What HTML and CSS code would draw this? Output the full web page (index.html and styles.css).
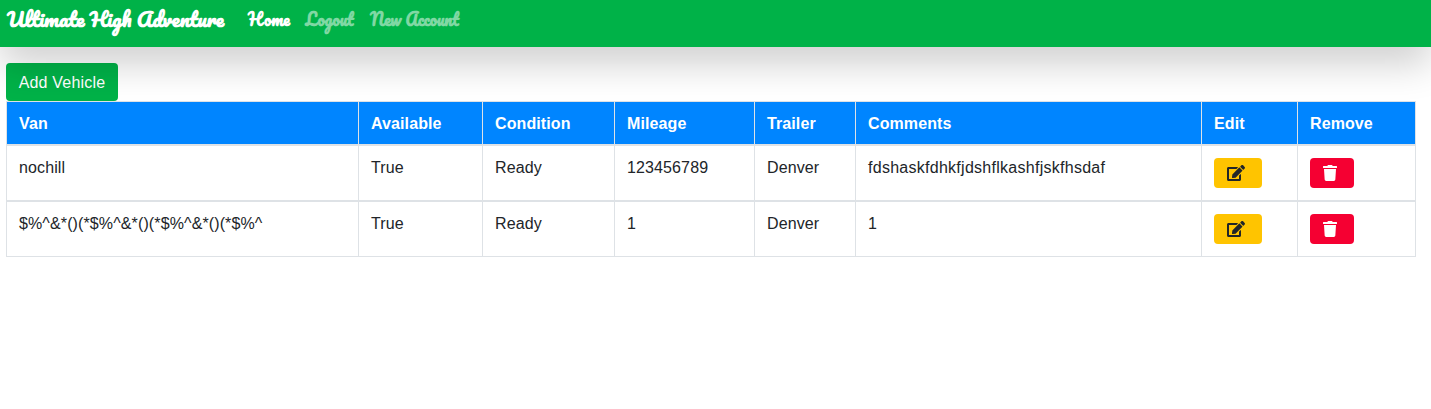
FILE: index.html
```html
<!DOCTYPE html>
<html lang="en">
<head>
<meta charset="utf-8">
<title>Ultimate High Adventure</title>
<link rel="stylesheet" href="styles.css">
</head>
<body>
<svg width="0" height="0" class="sprite" aria-hidden="true">
  <symbol id="edit" viewBox="0 0 576 512"><path d="M402.6 83.2l90.2 90.2c3.8 3.8 3.8 10 0 13.8L274.4 405.600l-92.800 10.300c-12.400 1.400-22.900-9.100-21.500-21.500l10.300-92.800L388.800 83.200c3.800-3.800 10-3.800 13.800 0zm162-22.900l-48.800-48.800c-15.200-15.200-39.900-15.200-55.200 0l-35.400 35.400c-3.800 3.800-3.800 10 0 13.800l90.200 90.200c3.800 3.800 10 3.800 13.800 0l35.400-35.400c15.200-15.300 15.200-40 0-55.200zM384 346.200V448H64V128h229.800c3.200 0 6.200-1.300 8.500-3.500l40-40c7.600-7.600 2.200-20.500-8.500-20.500H48C21.500 64 0 85.500 0 112v352c0 26.500 21.500 48 48 48h352c26.500 0 48-21.500 48-48V306.200c0-10.700-12.900-16-20.500-8.500l-40 40c-2.200 2.300-3.500 5.300-3.500 8.500z"/></symbol>
  <symbol id="trash" viewBox="0 0 448 512"><path d="M432 32H312l-9.400-18.700A24 24 0 0 0 281.100 0H166.800a23.720 23.720 0 0 0-21.400 13.300L136 32H16A16 16 0 0 0 0 48v32a16 16 0 0 0 16 16h416a16 16 0 0 0 16-16V48a16 16 0 0 0-16-16zM53.200 467a48 48 0 0 0 47.900 45h245.800a48 48 0 0 0 47.900-45L416 128H32z"/></symbol>
</svg>
<nav class="navbar">
  <a class="brand">Ultimate High Adventure</a>
  <a class="link home">Home</a>
  <a class="link logout">Logout</a>
  <a class="link account">New Account</a>
</nav>
<main class="content">
  <button class="btn add">Add Vehicle</button>
  <table class="vehicles">
    <colgroup><col class="c-van"><col class="c-available"><col class="c-condition"><col class="c-mileage"><col class="c-trailer"><col class="c-comments"><col class="c-edit"><col class="c-remove"></colgroup>
    <thead>
      <tr><th>Van</th><th>Available</th><th>Condition</th><th>Mileage</th><th>Trailer</th><th>Comments</th><th>Edit</th><th>Remove</th></tr>
    </thead>
    <tbody>
      <tr><td>nochill</td><td>True</td><td>Ready</td><td>123456789</td><td>Denver</td><td><span class="long">fdshaskfdhkfjdshflkashfjskfhsdaf</span></td>
        <td><button class="btn edit" aria-label="Edit"><svg class="i-edit"><use href="#edit"/></svg></button></td>
        <td><button class="btn remove" aria-label="Remove"><svg class="i-trash"><use href="#trash"/></svg></button></td></tr>
      <tr><td>$%^&amp;*()(*$%^&amp;*()(*$%^&amp;*()(*$%^</td><td>True</td><td>Ready</td><td>1</td><td>Denver</td><td>1</td>
        <td><button class="btn edit" aria-label="Edit"><svg class="i-edit"><use href="#edit"/></svg></button></td>
        <td><button class="btn remove" aria-label="Remove"><svg class="i-trash"><use href="#trash"/></svg></button></td></tr>
    </tbody>
  </table>
</main>
</body>
</html>
```
FILE: styles.css
```css
* { box-sizing: border-box; }
body {
  margin: 0;
  background: #fff;
  color: #212529;
  font: 16px/24px "Helvetica Neue", "Liberation Sans", Arial, sans-serif;
}
.sprite { position: absolute; }
.navbar {
  position: relative;
  display: flex;
  height: 47px;
  padding-left: 7px;
  background: #00b248;
  box-shadow: 0 16px 38px rgba(0, 0, 0, .2);
  color: #fff;
  font-family: Pacifico, cursive;
  font-weight: bold;
  white-space: nowrap;
}
.brand { width: 241px; font-size: 20px; line-height: 37px; }
.link { font-size: 16px; line-height: 39px; opacity: .5; }
.home { width: 57.5px; opacity: 1; }
.logout { width: 64.5px; }
.content { padding: 16px 15px 0 6px; }
.btn {
  display: block;
  border: 0;
  border-radius: 4px;
  font: inherit;
}
.add {
  width: 112px;
  height: 38px;
  padding: 1px 0 0;
  background: #00b248;
  color: #fff;
  letter-spacing: .2px;
  white-space: nowrap;
}
.vehicles {
  width: 1410px;
  table-layout: fixed;
  border-collapse: separate;
  border-spacing: 0;
  border-top: 1px solid #dee2e6;
  border-right: 1px solid #dee2e6;
}
.c-van { width: 352px; }
.c-available { width: 124px; }
.c-condition { width: 132px; }
.c-mileage { width: 140px; }
.c-trailer { width: 101px; }
.c-comments { width: 346px; }
.c-edit { width: 96px; }
.c-remove { width: 118px; }
th, td {
  padding: 10px 12px;
  border-left: 1px solid #dee2e6;
  border-bottom: 2px solid #dee2e6;
  text-align: left;
  vertical-align: top;
}
th {
  height: 44px;
  padding-bottom: 8px;
  background: #0085ff;
  color: #fff;
  letter-spacing: .1px;
}
td { height: 56px; letter-spacing: .12px; }
td:nth-child(n+7) { padding-top: 12px; }
tbody tr:last-child td { height: 55px; border-bottom-width: 1px; }
.long { letter-spacing: .27px; }
.edit, .remove {
  display: flex;
  align-items: center;
  height: 30px;
  padding: 0 13px;
}
.edit { width: 48px; background: #ffc400; color: #212529; }
.remove { width: 44px; background: #f50032; color: #fff; }
.btn svg { flex: none; height: 16px; fill: currentColor; }
.i-edit { width: 18px; }
.i-trash { width: 14px; }
```
